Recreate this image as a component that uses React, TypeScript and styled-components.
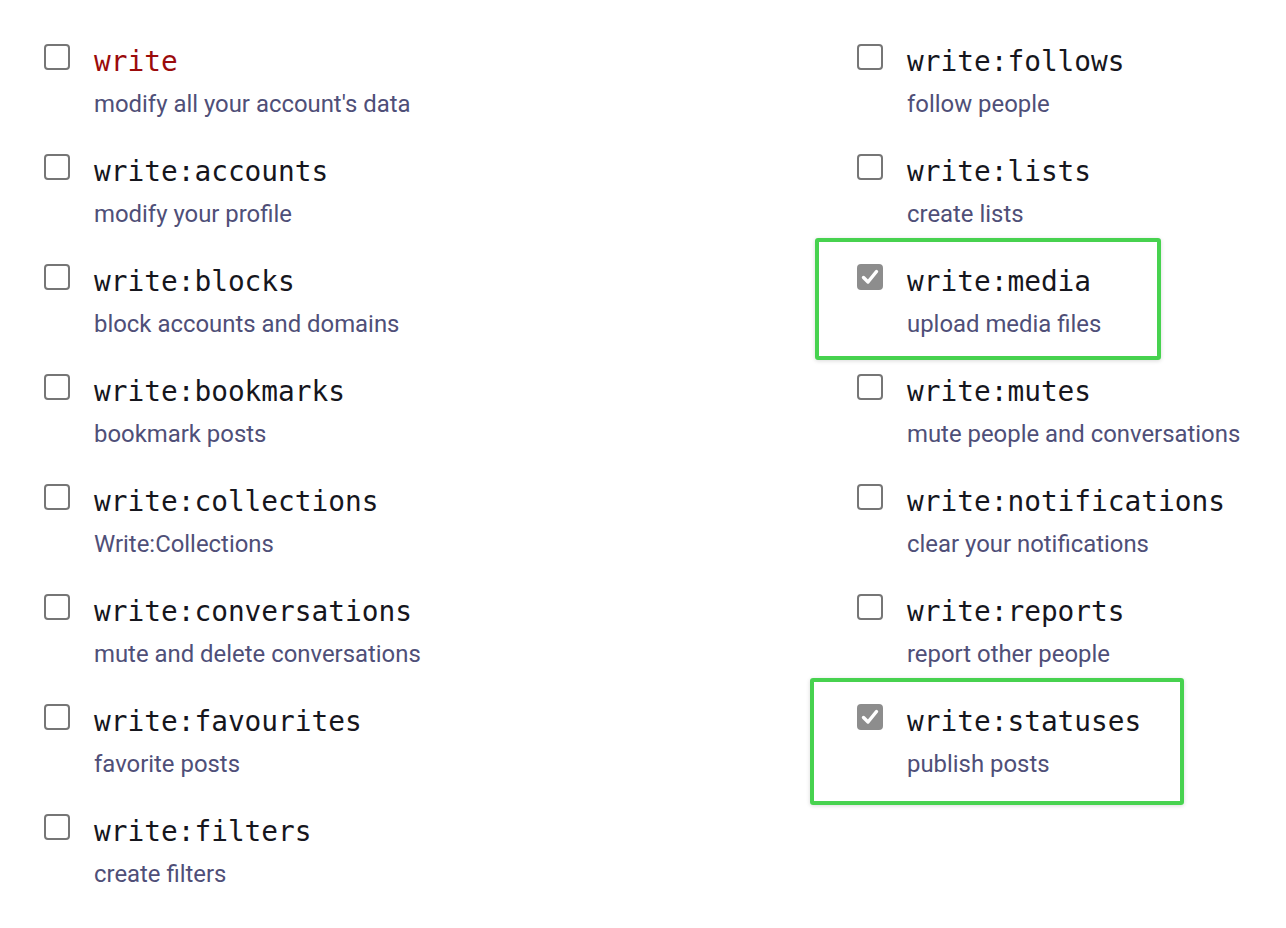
import React from "react";
import styled, { createGlobalStyle } from "styled-components";

const Global = createGlobalStyle`
  html, body { margin: 0; padding: 0; background: #ffffff; }
  body { font-family: Roboto, "Noto Sans", sans-serif; }
`;

const Page = styled.div`
  display: grid;
  grid-template-columns: 813px 1fr;
  padding: 44px 0 0 44px;
  width: 1286px;
  height: 928px;
  box-sizing: border-box;
`;

const Column = styled.div`
  display: flex;
  flex-direction: column;
`;

const Item = styled.label`
  position: relative;
  display: flex;
  align-items: flex-start;
  gap: 24px;
  height: 110px;
`;

const Box = styled.span<{ $checked?: boolean }>`
  flex: none;
  width: 26px;
  height: 26px;
  box-sizing: border-box;
  border-radius: 4px;
  border: 2px solid ${(p) => (p.$checked ? "#8d8d8d" : "#767676")};
  background: ${(p) => (p.$checked ? "#8d8d8d" : "#ffffff")};
  display: flex;
  align-items: center;
  justify-content: center;
`;

const Text = styled.div`
  display: flex;
  flex-direction: column;
  margin-top: 2px;
`;

const Scope = styled.code<{ $danger?: boolean }>`
  font-family: "DejaVu Sans Mono", "Liberation Mono", monospace;
  font-size: 27.8px;
  line-height: 32px;
  color: ${(p) => (p.$danger ? "#9b0b0b" : "#16161d")};
`;

const Desc = styled.span`
  font-family: Roboto, "Noto Sans", sans-serif;
  font-size: 23.9px;
  line-height: 28px;
  margin-top: 12px;
  color: #4f4f78;
`;

const Highlight = styled.span<{ $top: number; $left: number; $w: number; $h: number }>`
  position: absolute;
  top: ${(p) => p.$top}px;
  left: ${(p) => p.$left}px;
  width: ${(p) => p.$w}px;
  height: ${(p) => p.$h}px;
  box-sizing: border-box;
  border: 4px solid #47d24f;
  border-radius: 3px;
  box-shadow: 0 1px 4px rgba(0, 0, 0, 0.15);
  pointer-events: none;
`;

type Entry = {
  scope: string;
  desc: string;
  danger?: boolean;
  checked?: boolean;
  hl?: { top: number; left: number; w: number; h: number };
};

const left: Entry[] = [
  { scope: "write", desc: "modify all your account's data", danger: true },
  { scope: "write:accounts", desc: "modify your profile" },
  { scope: "write:blocks", desc: "block accounts and domains" },
  { scope: "write:bookmarks", desc: "bookmark posts" },
  { scope: "write:collections", desc: "Write:Collections" },
  { scope: "write:conversations", desc: "mute and delete conversations" },
  { scope: "write:favourites", desc: "favorite posts" },
  { scope: "write:filters", desc: "create filters" },
];

const right: Entry[] = [
  { scope: "write:follows", desc: "follow people" },
  { scope: "write:lists", desc: "create lists" },
  {
    scope: "write:media",
    desc: "upload media files",
    checked: true,
    hl: { top: -26, left: -42, w: 346, h: 122 },
  },
  { scope: "write:mutes", desc: "mute people and conversations" },
  { scope: "write:notifications", desc: "clear your notifications" },
  { scope: "write:reports", desc: "report other people" },
  {
    scope: "write:statuses",
    desc: "publish posts",
    checked: true,
    hl: { top: -26, left: -47, w: 374, h: 127 },
  },
];

const Check = () => (
  <svg width="22" height="22" viewBox="0 0 22 22" aria-hidden>
    <polyline
      points="4.5,11.5 9,16 17.5,5.5"
      fill="none"
      stroke="#ffffff"
      strokeWidth="3.4"
      strokeLinecap="round"
      strokeLinejoin="round"
    />
  </svg>
);

const ScopeItem = ({ e }: { e: Entry }) => (
  <Item>
    <Box $checked={e.checked}>{e.checked && <Check />}</Box>
    <Text>
      <Scope $danger={e.danger}>{e.scope}</Scope>
      <Desc>{e.desc}</Desc>
    </Text>
    {e.hl && <Highlight $top={e.hl.top} $left={e.hl.left} $w={e.hl.w} $h={e.hl.h} />}
  </Item>
);

export default function App() {
  return (
    <>
      <Global />
      <Page>
        <Column>
          {left.map((e) => (
            <ScopeItem key={e.scope} e={e} />
          ))}
        </Column>
        <Column>
          {right.map((e) => (
            <ScopeItem key={e.scope} e={e} />
          ))}
        </Column>
      </Page>
    </>
  );
}
